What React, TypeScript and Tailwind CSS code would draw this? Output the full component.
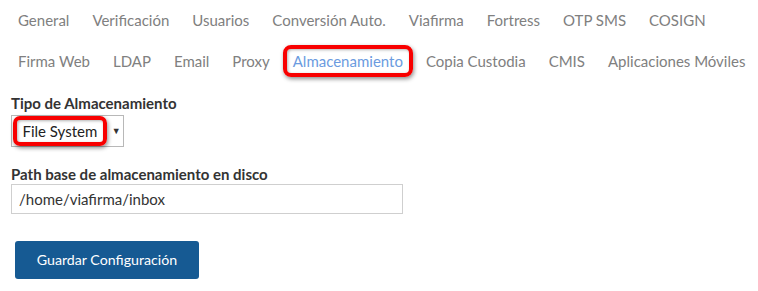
import React from "react";

const rowOne = ["General", "Verificación", "Usuarios", "Conversión Auto.", "Viafirma", "Fortress", "OTP SMS", "COSIGN"];
const rowTwo = ["Firma Web", "LDAP", "Email", "Proxy", "Almacenamiento", "Copia Custodia", "CMIS", "Aplicaciones Móviles"];

const highlight =
  "border-[4px] border-[#f80000] shadow-[1px_2px_4px_rgba(0,0,0,0.45),inset_1px_1px_3px_rgba(0,0,0,0.3)]";

const Tab = ({ label, active }: { label: string; active?: boolean }) => {
  if (active) {
    return (
      <div className={`mx-[1.5px] rounded-[8px] px-[6px] py-[1px] leading-[22px] text-[#6b9be0] ${highlight}`}>
        {label}
      </div>
    );
  }
  return <div className="px-[11.5px] py-[7px] leading-[22px]">{label}</div>;
};

export default function App() {
  return (
    <div className="h-[291px] w-[758px] bg-white font-['Lato','Liberation_Sans',sans-serif] text-[15px] text-[#333]">
      <div className="flex items-center pl-[6.5px] pt-[2px] text-[#808080]">
        {rowOne.map((t) => (
          <Tab key={t} label={t} />
        ))}
      </div>
      <div className="mt-[5px] flex h-[36px] items-center pl-[6.5px] text-[#808080]">
        {rowTwo.map((t) => (
          <Tab key={t} label={t} active={t === "Almacenamiento"} />
        ))}
      </div>

      <div className="pl-[11px] pt-[15px]">
        <div className="font-bold leading-[18px]">Tipo de Almacenamiento</div>
        <div className="mt-[3px] flex h-[32px] w-[113px] items-center border border-[#b8b8b8] pl-[1px]">
          <div className={`rounded-[7px] px-[5.5px] leading-[22px] text-[#222] ${highlight}`}>File System</div>
          <span className="ml-[5px] text-[9px] text-[#333]">▼</span>
        </div>

        <div className="mt-[18px] font-bold leading-[18px]">Path base de almacenamiento en disco</div>
        <div className="mt-[1px] flex h-[30px] w-[392px] items-center border border-[#cfcfcf] pl-[7px] text-[#333]">
          /home/viafirma/inbox
        </div>

        <button className="ml-[4px] mt-[27px] h-[38px] w-[184px] rounded-[3px] bg-[#165a93] text-[14.2px] text-white">
          Guardar Configuración
        </button>
      </div>
    </div>
  );
}
